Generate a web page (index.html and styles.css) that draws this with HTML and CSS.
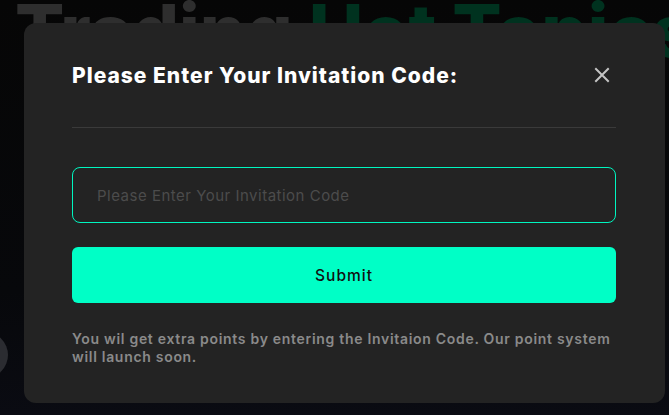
FILE: index.html
```html
<!DOCTYPE html>
<html lang="en">
<head>
<meta charset="utf-8">
<title>Invitation Code</title>
<link rel="stylesheet" href="styles.css">
</head>
<body>
<div class="page">
  <div class="hero-title"><span class="grey">Trading</span> <span class="green">Hot Topics</span></div>
  <div class="avatar"></div>
  <div class="modal">
    <div class="modal-head">
      <h2 class="modal-title">Please Enter Your Invitation Code:</h2>
      <button class="close" aria-label="Close">
        <svg width="16" height="16" viewBox="0 0 16 16"><path d="M2 2 L14 14 M14 2 L2 14" stroke="#c4c4c4" stroke-width="2" stroke-linecap="square"/></svg>
      </button>
    </div>
    <div class="modal-body">
      <input class="code-input" type="text" placeholder="Please Enter Your Invitation Code">
      <button class="submit">Submit</button>
      <p class="note">You wil get extra points by entering the Invitaion Code. Our point system will launch soon.</p>
    </div>
  </div>
</div>
</body>
</html>
```
FILE: styles.css
```css
* { box-sizing: border-box; }
html, body { margin: 0; padding: 0; }
body {
  background: #060606;
  font-family: "Inter", "Open Sans", sans-serif;
  width: 669px;
  height: 415px;
  overflow: hidden;
}
.page {
  position: relative;
  width: 669px;
  height: 415px;
  background: linear-gradient(#060606 0%, #07080b 70%, #0a0b12 100%);
  padding: 23px 4px 0 24px;
}
.hero-title {
  position: absolute;
  left: 15px;
  top: -6px;
  font-family: "Inter", sans-serif;
  font-weight: 800;
  font-size: 73px;
  letter-spacing: 0;
  white-space: nowrap;
  line-height: 1;
}
.hero-title .grey { color: #2e2e2e; }
.hero-title .green { color: #00321f; }
.avatar {
  position: absolute;
  left: -38px;
  top: 332px;
  width: 46px;
  height: 46px;
  border-radius: 50%;
  background: #2b2c31;
}
.modal {
  position: relative;
  width: 641px;
  height: 380px;
  background: #232323;
  border-radius: 12px;
  padding: 0 49px 0 48px;
}
.modal-head {
  height: 105px;
  display: flex;
  align-items: center;
  justify-content: space-between;
  border-bottom: 1px solid #3a3a3a;
}
.modal-title {
  margin: 0;
  color: #ffffff;
  font-size: 21px;
  font-weight: 800;
  letter-spacing: 1px;
}
.close {
  background: none;
  border: 0;
  padding: 0;
  margin-right: 6px;
  width: 16px;
  height: 16px;
  display: flex;
}
.modal-body {
  padding-top: 39px;
  display: flex;
  flex-direction: column;
}
.code-input {
  height: 56px;
  border: 1px solid #00f5c0;
  border-radius: 8px;
  background: transparent;
  padding: 0 24px;
  font-family: "Inter", sans-serif;
  font-size: 15px;
  letter-spacing: 0.5px;
  color: #ddd;
  outline: none;
}
.code-input::placeholder { color: #4c4c4c; }
.submit {
  margin-top: 24px;
  height: 56px;
  border: 0;
  border-radius: 6px;
  background: #00ffc6;
  color: #111;
  font-family: "Inter", sans-serif;
  font-size: 15.5px;
  font-weight: 500;
  letter-spacing: 1px;
}
.note {
  margin: 27px 0 0;
  color: #8a8a8a;
  font-size: 14px;
  font-weight: 600;
  line-height: 18px;
  letter-spacing: 0.7px;
}
```
